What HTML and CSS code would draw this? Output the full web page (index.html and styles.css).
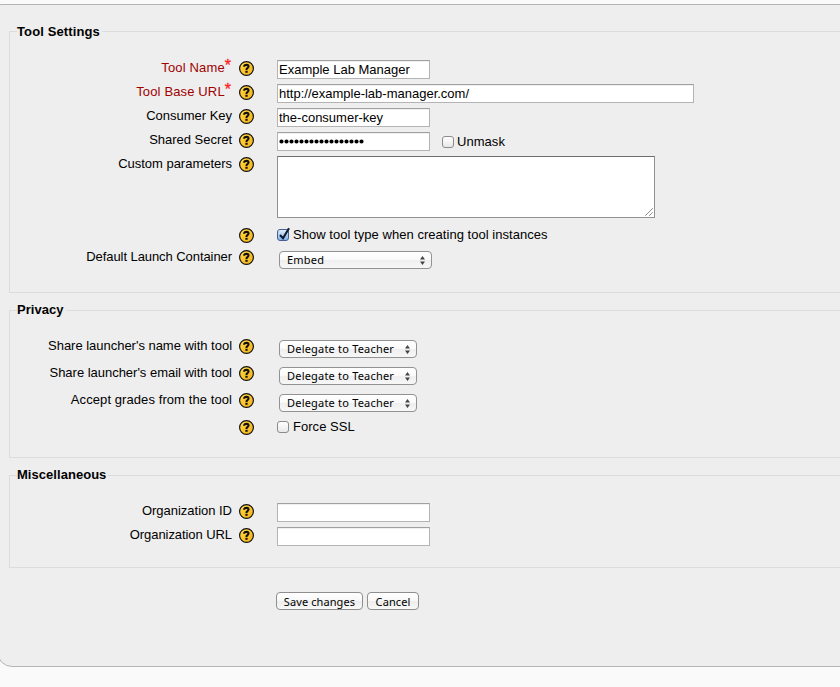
FILE: index.html
```html
<!DOCTYPE html>
<html lang="en">
<head>
<meta charset="utf-8">
<title>Tool Settings</title>
<link rel="stylesheet" href="styles.css">
</head>
<body>
<svg class="defs" width="0" height="0" aria-hidden="true">
  <defs>
    <linearGradient id="gold" x1="0" y1="0" x2="1" y2="1"><stop offset="0" stop-color="#ffe25c"/><stop offset=".4" stop-color="#fdc82f"/><stop offset="1" stop-color="#f0b01c"/></linearGradient>
    <symbol id="help" viewBox="0 0 15 15">
      <circle cx="7.5" cy="7.5" r="6.9" fill="url(#gold)" stroke="#111" stroke-width="1.2"/>
      <path d="M5.2 5.8V5Q5.5 3.8 7.6 3.8Q9.5 3.9 9.5 5.4Q9.4 6.6 8.3 7.2Q7.5 7.6 7.5 8.9" fill="none" stroke="#111" stroke-width="2.1"/>
      <rect x="6.4" y="9.8" width="2.2" height="2" fill="#111"/>
    </symbol>
    <symbol id="arrows" viewBox="0 0 5 9"><path d="M0 3.4L2.5 0L5 3.4ZM0 5.6L2.5 9L5 5.6Z" fill="#444"/></symbol>
  </defs>
</svg>
<form class="panel">
  <fieldset class="group tool">
    <legend>Tool Settings</legend>
    <div class="row"><label class="req">Tool Name<i>*</i></label><svg class="help"><use href="#help"/></svg><input class="text" value="Example Lab Manager"></div>
    <div class="row"><label class="req">Tool Base URL<i>*</i></label><svg class="help"><use href="#help"/></svg><input class="text wide" value="http://example-lab-manager.com/"></div>
    <div class="row"><label>Consumer Key</label><svg class="help"><use href="#help"/></svg><input class="text" value="the-consumer-key"></div>
    <div class="row"><label>Shared Secret</label><svg class="help"><use href="#help"/></svg><div class="secret"><div class="text dots"><svg width="86" height="5"><path d="M2.5 2.5H84" class="dotline"/></svg></div><span class="box"></span><span>Unmask</span></div></div>
    <div class="row area"><label>Custom parameters</label><svg class="help"><use href="#help"/></svg><div class="textarea"><svg width="8" height="8"><path d="M.5 7.5L7.5 .5M4.5 7.5L7.5 4.5" stroke="#444" stroke-dasharray="1.1 .4"/></svg></div></div>
    <div class="row check-row"><label></label><svg class="help"><use href="#help"/></svg><div class="check"><span class="box on"><svg width="14" height="14"><path d="M3 7L6 10.2L12 .2" fill="none" stroke="#111a30" stroke-width="2.1"/></svg></span><span>Show tool type when creating tool instances</span></div></div>
    <div class="row"><label class="tight">Default Launch Container</label><svg class="help"><use href="#help"/></svg><div class="select embed"><span>Embed</span><svg><use href="#arrows"/></svg></div></div>
  </fieldset>
  <fieldset class="group privacy">
    <legend>Privacy</legend>
    <div class="row"><label>Share launcher's name with tool</label><svg class="help"><use href="#help"/></svg><div class="select"><span>Delegate to Teacher</span><svg><use href="#arrows"/></svg></div></div>
    <div class="row"><label>Share launcher's email with tool</label><svg class="help"><use href="#help"/></svg><div class="select"><span>Delegate to Teacher</span><svg><use href="#arrows"/></svg></div></div>
    <div class="row"><label class="loose">Accept grades from the tool</label><svg class="help"><use href="#help"/></svg><div class="select"><span>Delegate to Teacher</span><svg><use href="#arrows"/></svg></div></div>
    <div class="row"><label></label><svg class="help"><use href="#help"/></svg><div class="check"><span class="box"></span><span>Force SSL</span></div></div>
  </fieldset>
  <fieldset class="group misc">
    <legend>Miscellaneous</legend>
    <div class="row"><label>Organization ID</label><svg class="help"><use href="#help"/></svg><input class="text"></div>
    <div class="row"><label class="tight">Organization URL</label><svg class="help"><use href="#help"/></svg><input class="text"></div>
  </fieldset>
  <div class="actions"><button type="button" class="save">Save changes</button><button type="button" class="cancel">Cancel</button></div>
</form>
</body>
</html>
```
FILE: styles.css
```css
* { box-sizing: border-box; }
html { overflow: hidden; }
body {
  margin: 0;
  padding-top: 4px;
  height: 687px;
  overflow: hidden;
  background: #fafafa;
  color: #000;
  font: 13px/15px "Liberation Sans", Arial, sans-serif;
  letter-spacing: .04px;
}
.defs { display: block; height: 0; }
.panel {
  margin: 0 -20px 0 -3px;
  height: 663px;
  padding: 26px 0 0 11px;
  background: #eee;
  border: 1px solid #b5b5b5;
  border-radius: 4px 0 0 15px;
}
.group {
  margin: 0;
  border: 1px solid #dcdcdc;
  display: flow-root;
  padding: 0;
  min-width: 0;
}
.group legend {
  display: block;
  float: left;
  height: 15px;
  padding: 0 2px 0 0;
  margin: -8px 0 0 7px;
  background: #eee;
  font-weight: bold;
}
.tool legend { letter-spacing: .12px; }
.group.privacy legend, .group.misc legend { margin-top: -9px; }
.group .row { clear: both; }
.tool { height: 262px; }
.privacy { height: 148px; margin-top: 17px; }
.misc { height: 93px; margin-top: 17px; }
.row {
  display: grid;
  grid-template-columns: 222px 15px 1fr;
  column-gap: 7px;
  height: 24px;
  align-items: start;
}
.row > :nth-child(3) { margin-left: 16px; }
legend + .row { margin-top: 27px; }
.tool legend + .row { margin-top: 28px; }
.privacy .row { height: 27px; }
.row.area { height: 71px; }
.row.check-row { height: 22px; }
label { text-align: right; white-space: nowrap; min-height: 15px; letter-spacing: -.02px; }
.tight { letter-spacing: -.07px; }
.loose { letter-spacing: .08px; }
.req { color: #a00000; padding-right: 1px; letter-spacing: .14px; }
.req i { color: #ff2020; font-style: normal; font-size: 16px; line-height: 10px; vertical-align: 1px; letter-spacing: 0; -webkit-text-stroke: .3px #ff2020; }
.help { width: 15px; height: 15px; margin-top: 1px; }
.text {
  display: block;
  width: 153px;
  height: 19px;
  padding: 0 1px;
  margin: 0;
  border: 1px solid #b4b4b4;
  border-top-color: #a0a0a0;
  border-radius: 0;
  background: #fff;
  box-shadow: inset 0 1px #f0f0f0;
  font: inherit;
  letter-spacing: 0;
  color: #000;
}
.text.wide { width: 417px; }
.secret { display: flex; align-items: center; height: 19px; }
.dots { padding: 6px 1px; }
.dots svg { display: block; }
.dotline { stroke: #000; stroke-width: 4.2; stroke-linecap: round; stroke-dasharray: 0 5; }
.box {
  flex: none;
  width: 12px;
  height: 12px;
  border: 1px solid #8b8b8b;
  border-radius: 3px;
  background: linear-gradient(#fff, #e8e8e8);
}
.secret .box { margin: 0 3px 0 12px; }
.check { display: flex; height: 15px; }
.check .box { margin: 2px 4px 0 0; }
.on { border-color: #4a5d91; background: linear-gradient(#dcecfc, #7fb5ea); }
.on svg { display: block; margin: -2px 0 0 -1px; overflow: visible; }
.textarea {
  display: flex;
  justify-content: flex-end;
  align-items: flex-end;
  width: 378px;
  height: 62px;
  padding: 1px;
  background: #fff;
  border: 1px solid #929292;
  border-top-color: #6e6e6e;
}
.select {
  display: flex;
  justify-content: space-between;
  align-items: center;
  width: 138px;
  height: 18px;
  border: 1px solid #929292;
  border-radius: 4px;
  background: linear-gradient(#fff, #fafafa 48%, #efefef 52%, #f7f7f7);
  padding: 0 6px 0 7px;
  font: 11px/16px "Noto Sans", sans-serif;
  letter-spacing: .2px;
}
.row > .select { margin: 2px 0 0 18px; }
.select.embed { width: 153px; }
.select svg { width: 5px; height: 9px; }
.actions { display: flex; gap: 4px; margin: 24px 0 0 267px; }
button {
  height: 18px;
  padding: 0;
  border: 1px solid #8e8e8e;
  border-radius: 4px;
  background: linear-gradient(#fff, #f8f8f8 48%, #ededed 52%, #f8f8f8);
  font: 11px/17px "Noto Sans", sans-serif;
  letter-spacing: .1px;
  color: #000;
}
.save { width: 87px; }
.cancel { width: 52px; }
```
